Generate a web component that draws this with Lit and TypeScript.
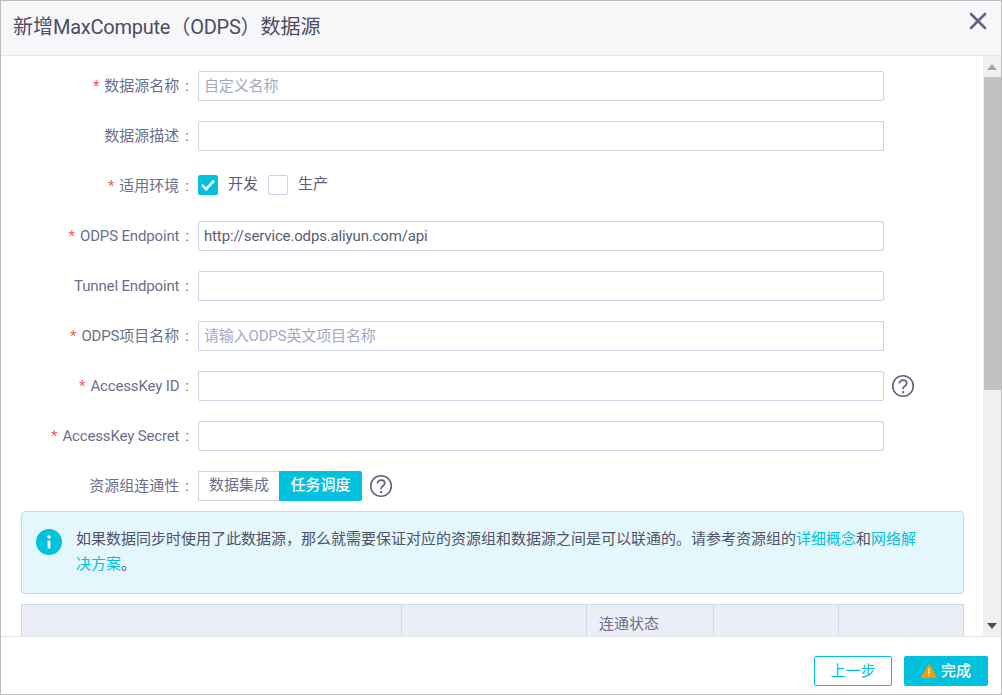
import { LitElement, html, css } from "lit";
import { customElement } from "lit/decorators.js";

const help = html`<svg class="help" width="24" height="24" viewBox="0 0 24 24" fill="none"><circle cx="12" cy="12" r="10.3" stroke="#5f6384" stroke-width="1.6"/><path d="M8.4 9.6c0-2.1 1.6-3.5 3.7-3.5s3.6 1.3 3.6 3.1c0 1.6-.9 2.3-2 3-1 .7-1.6 1.2-1.6 2.4v.6" stroke="#5f6384" stroke-width="1.8"/><circle cx="12.1" cy="18.1" r="1.2" fill="#5f6384"/></svg>`;

@customElement("app-root")
export class AppRoot extends LitElement {
  static styles = css`
    :host { display: block; width: 1002px; height: 695px; }
    * { box-sizing: border-box; }
    .win { width: 1002px; height: 695px; border: 1px solid #bdbdbd; display: flex; flex-direction: column; background: #fff; font: 15px/20px Roboto, "Noto Sans CJK SC", sans-serif; color: #5f6384; overflow: hidden; }
    .head { height: 55px; flex: none; background: #f7f7fa; border-bottom: 1px solid #e6e6e8; display: flex; align-items: center; justify-content: space-between; padding: 0 14px 0 12px; }
    .title { font-size: 20px; color: #4a4d63; margin-top: -3px; }
    .title span { letter-spacing: -0.25px; }
    .close { display: block; margin-top: -14px; }
    .main { flex: 1; min-height: 0; display: flex; }
    .content { flex: 1; min-width: 0; overflow: hidden; padding: 15px 18px 0 20px; }
    .rows { display: flex; flex-direction: column; gap: 20px; }
    .row { display: flex; height: 30px; align-items: center; }
    .label { width: 177px; flex: none; text-align: right; white-space: pre; color: #6c6f8b; padding-right: 9px; }
    .lat { letter-spacing: -0.15px; }
    .req { color: #f25c5c; margin-right: 5px; }
    .colon { margin-left: 6px; }
    .input { width: 686px; height: 30px; flex: none; border: 1px solid #cdd2e4; border-radius: 2px; padding: 0 5px; line-height: 28px; color: #5a5d75; letter-spacing: -0.15px; }
    .ph { color: #a4a9c0; }
    .help { flex: none; margin-left: 7px; }
    .checks { display: flex; align-items: center; height: 30px; margin-top: -3px; }
    .box { width: 20px; height: 20px; border: 1px solid #cdd2e4; border-radius: 2px; display: flex; align-items: center; justify-content: center; flex: none; }
    .box.on { background: #00c1de; border-color: #00c1de; }
    .ctext { margin: -1px 10px 0; color: #5a5d75; }
    .seg { display: flex; height: 30px; width: 164px; }
    .seg > div { display: flex; align-items: center; justify-content: center; padding-bottom: 3px; }
    .s1 { width: 81px; border: 1px solid #cdd2e4; border-right: none; border-radius: 2px 0 0 2px; color: #6c6f8b; }
    .s2 { width: 83px; background: #00c1de; color: #fff; border-radius: 0 2px 2px 0; font-weight: 500; }
    .notice { margin-top: 10px; height: 83px; width: 943px; background: #e3f7fc; border: 1px solid #a5e6ee; border-radius: 4px; display: flex; padding: 16px 30px 0 14px; }
    .notice svg { flex: none; margin-top: 1px; }
    .ntext { margin-left: 14px; line-height: 25px; color: #4f5268; margin-top: -1px; width: 850px; }
    a { color: #00c1de; text-decoration: none; }
    table { margin-top: 10px; border-collapse: collapse; table-layout: fixed; width: 942px; }
    th { background: #ebeef6; border: 1px solid #d3d5e8; height: 60px; font-weight: 400; text-align: left; vertical-align: top; padding: 9px 12px; color: #6c6f8b; }
    .bar { width: 18px; flex: none; background: #f0f0f0; display: flex; flex-direction: column; align-items: center; }
    .arrow { height: 21px; flex: none; display: flex; align-items: center; justify-content: center; }
    .thumb { width: 17px; height: 313px; margin-left: 1px; background: #c1c1c1; flex: none; }
    .sp { flex: 1; }
    .foot { height: 58px; flex: none; border-top: 1px solid #e6e6e8; display: flex; justify-content: flex-end; align-items: flex-start; gap: 12px; padding: 19px 13px 0 0; }
    .btn { height: 30px; border-radius: 2px; display: flex; align-items: center; justify-content: center; color: #00c1de; padding-bottom: 1px; }
    .prev { width: 78px; border: 1px solid #00c1de; background: #fff; }
    .done { width: 84px; background: #00c1de; color: #fff; gap: 4px; font-weight: 500; }
  `;

  private row(label: unknown, req: boolean, body: unknown) {
    return html`<div class="row"><div class="label">${req ? html`<span class="req">*</span>` : ""}${label}<span class="colon">:</span></div>${body}</div>`;
  }

  render() {
    const lat = (s: string) => html`<span class="lat">${s}</span>`;
    return html`<div class="win">
      <div class="head">
        <div class="title">新增<span>MaxCompute</span>（<span>ODPS</span>）数据源</div>
        <svg class="close" width="18" height="18" viewBox="0 0 18 18"><path d="M2 2l14 14M16 2L2 16" stroke="#5f6384" stroke-width="2.6" stroke-linecap="round"/></svg>
      </div>
      <div class="main">
        <div class="content">
          <div class="rows">
            ${this.row("数据源名称", true, html`<div class="input ph">自定义名称</div>`)}
            ${this.row("数据源描述", false, html`<div class="input"></div>`)}
            ${this.row("适用环境", true, html`<div class="checks">
              <div class="box on"><svg width="16" height="14" viewBox="0 0 16 14" fill="none"><path d="M2 7l4.2 4.2L14 2.6" stroke="#fff" stroke-width="2.6"/></svg></div>
              <span class="ctext">开发</span>
              <div class="box"></div>
              <span class="ctext">生产</span>
            </div>`)}
            ${this.row(lat("ODPS Endpoint"), true, html`<div class="input">http://service.odps.aliyun.com/api</div>`)}
            ${this.row(lat("Tunnel Endpoint"), false, html`<div class="input"></div>`)}
            ${this.row(html`${lat("ODPS")}项目名称`, true, html`<div class="input ph">请输入ODPS英文项目名称</div>`)}
            ${this.row(lat("AccessKey ID"), true, html`<div class="input"></div>${help}`)}
            ${this.row(lat("AccessKey Secret"), true, html`<div class="input"></div>`)}
            ${this.row("资源组连通性", false, html`<div class="seg"><div class="s1">数据集成</div><div class="s2">任务调度</div></div>${help}`)}
          </div>
          <div class="notice">
            <svg width="26" height="26" viewBox="0 0 26 26"><circle cx="13" cy="13" r="13" fill="#00c1de"/><circle cx="13" cy="8" r="1.8" fill="#fff"/><rect x="11.6" y="11.5" width="2.8" height="8" fill="#fff"/></svg>
            <div class="ntext">如果数据同步时使用了此数据源，那么就需要保证对应的资源组和数据源之间是可以联通的。请参考资源组的<a>详细概念</a>和<a>网络解决方案</a>。</div>
          </div>
          <table>
            <colgroup><col style="width:380px"/><col style="width:185px"/><col style="width:127px"/><col style="width:125px"/><col style="width:125px"/></colgroup>
            <tr><th></th><th></th><th>连通状态</th><th></th><th></th></tr>
          </table>
        </div>
        <div class="bar">
          <div class="arrow"><svg width="10" height="6" viewBox="0 0 10 6"><path d="M0 6L5 0l5 6z" fill="#a3a3a3"/></svg></div>
          <div class="thumb"></div>
          <div class="sp"></div>
          <div class="arrow"><svg width="10" height="6" viewBox="0 0 10 6"><path d="M0 0l5 6 5-6z" fill="#505050"/></svg></div>
        </div>
      </div>
      <div class="foot">
        <div class="btn prev">上一步</div>
        <div class="btn done"><svg width="16" height="14" viewBox="0 0 16 14"><path d="M8 0.5L15.6 13.6H.4z" fill="#ff9800" stroke="#ff9800" stroke-linejoin="round"/><rect x="7.2" y="4.5" width="1.6" height="5" fill="#fff" opacity=".85"/><rect x="7.2" y="10.4" width="1.6" height="1.6" fill="#fff" opacity=".85"/></svg>完成</div>
      </div>
    </div>`;
  }
}
